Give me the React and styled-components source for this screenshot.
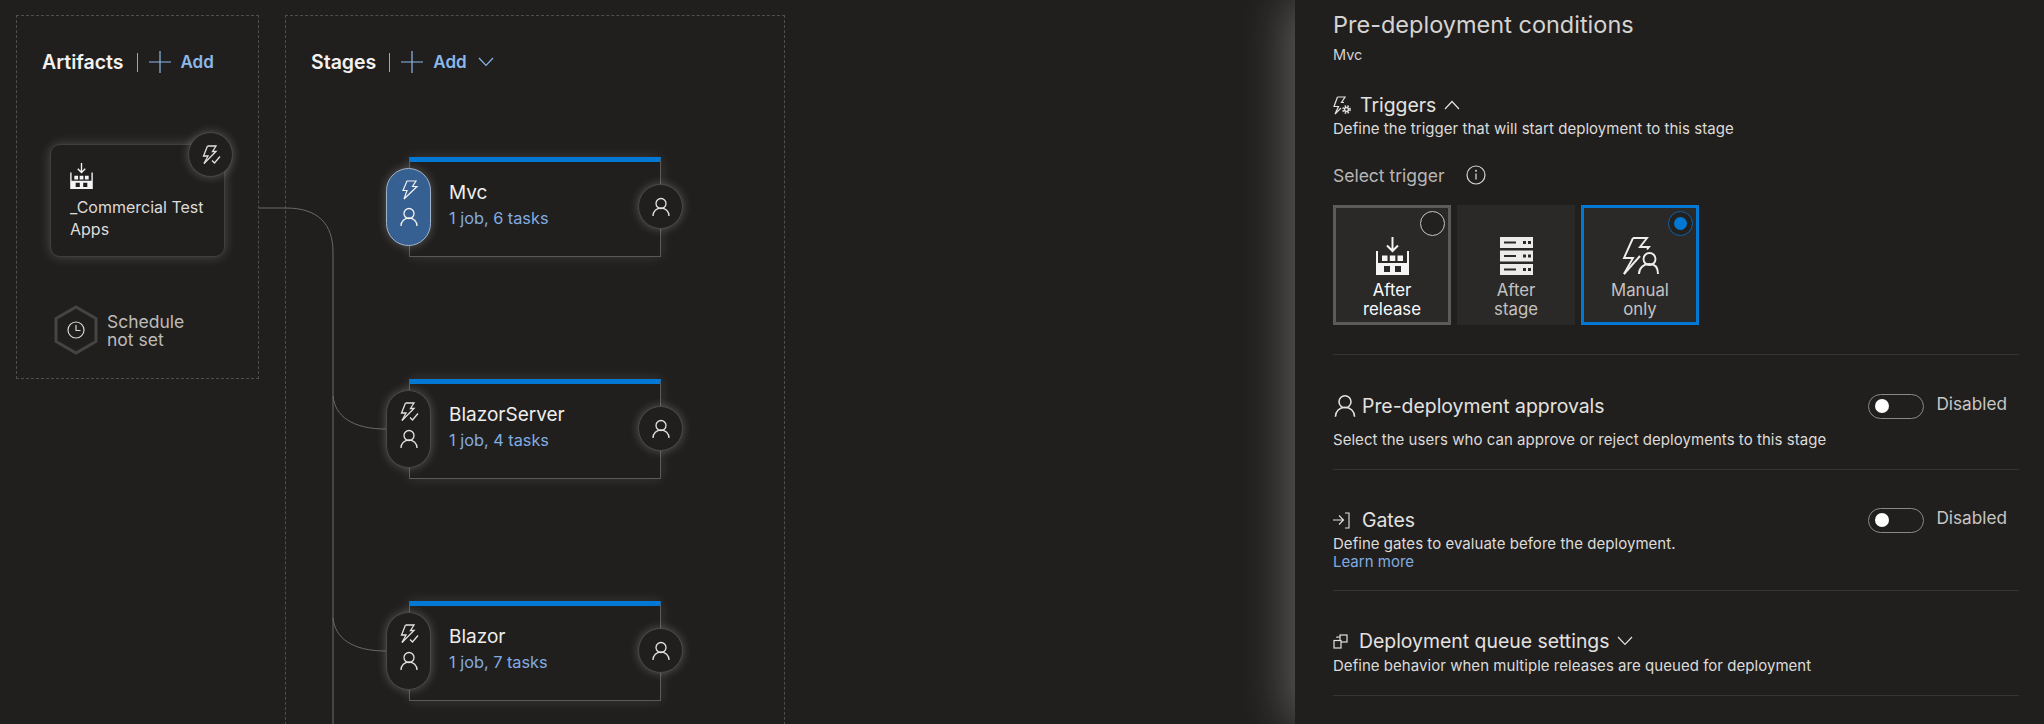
import React from "react";
import styled, { createGlobalStyle } from "styled-components";

const Global = createGlobalStyle`
  html, body { margin: 0; padding: 0; background: #201f1e; }
  body { font-family: Inter, "Noto Sans", sans-serif; color: #e8e6e4; }
  * { box-sizing: border-box; }
  svg { display: block; flex: none; }
`;

const Page = styled.div`
  width: 2044px; height: 724px; display: flex; overflow: hidden; background: #201f1e; position: relative;
`;
const Canvas = styled.main`
  flex: 1; display: flex; align-items: flex-start; gap: 26px; padding: 15px 0 0 16px; position: relative;
`;
const Wires = styled.svg`
  position: absolute; left: 0; top: 0; width: 800px; height: 724px; pointer-events: none;
`;
const Zone = styled.section`
  position: relative;
  width: ${p => p.$w}px; height: ${p => p.$h}px; flex: none;
  border: 1px dashed #4f4e4d;
  padding-left: ${p => p.$pad}px;
`;
const Header = styled.div`
  display: flex; align-items: center; height: 36px; margin-top: 28px;
`;
const HeaderTitle = styled.span`
  font-size: 19.5px; font-weight: 600; color: #f3f1ef;
`;
const HeaderSep = styled.span`
  width: 1px; height: 19px; background: #a8a6a4; margin: 0 11px 0 13px;
`;
const AddLabel = styled.span`
  font-size: 17px; font-weight: 600; color: #8cb7ea; margin-left: 10px;
`;
const ArtifactCard = styled.div`
  position: relative; width: 175px; height: 113px; margin: 64px 0 0 8px;
  background: #201f1e; border-radius: 10px; border: 1px solid #403f3e;
  box-shadow: 0 0 12px rgba(255,255,255,.2);
  padding: 18px 0 0 19px;
`;
const ArtifactName = styled.div`
  font-size: 16px; line-height: 22px; color: #dddbd9; margin-top: 7px; width: 150px;
`;
const Round = styled.div`
  position: absolute; width: 45px; height: 45px; border-radius: 50%;
  background: #201f1e; border: 1px solid #4a4948;
  box-shadow: 0 0 10px rgba(255,255,255,.25);
  display: flex; align-items: center; justify-content: center;
  left: ${p => p.$left}px; top: ${p => p.$top}px;
`;
const Schedule = styled.div`
  display: flex; align-items: center; gap: 8px; margin: 48px 0 0 11px;
`;
const ScheduleText = styled.div`
  font-size: 17.5px; line-height: 18px; color: #bdbbb9; margin-top: 2px;
`;
const StageList = styled.div`
  display: flex; flex-direction: column; gap: 122px; margin: 77px 0 0 98px;
`;
const Stage = styled.article`
  position: relative; width: 252px; height: 100px; flex: none;
  border: 1px solid #5a5958; border-top: 5px solid #0078d4;
  box-shadow: 0 0 12px rgba(255,255,255,.12);
  padding: 19px 0 0 39px;
`;
const StageName = styled.div`
  font-size: 19px; line-height: 24px; color: #f0eeec;
`;
const StageInfo = styled.div`
  font-size: 16.3px; line-height: 20px; margin-top: 3px; color: #82ace0;
`;
const Pill = styled.div`
  position: absolute; left: -24px; top: 6px; width: 45px; height: 78px; border-radius: 23px;
  background: ${p => p.$active ? "#365f92" : "#201f1e"};
  border: 1px solid ${p => p.$active ? "#9fb3cb" : "#4a4948"};
  box-shadow: 0 0 10px rgba(255,255,255,.25);
  display: flex; flex-direction: column; align-items: center; justify-content: center; gap: 7px;
  padding-bottom: 8px;
`;
const Panel = styled.aside`
  width: 749px; flex: none; height: 724px; background: #201f1e; position: relative;
  box-shadow: -6px 0 46px rgba(255,255,255,.3);
  padding: 10px 25px 0 38px;
`;
const Title = styled.h1`
  font-size: 23.5px; line-height: 30px; font-weight: 400; margin: 0; color: #d6d4d2;
`;
const Sub = styled.div`
  font-size: 14.5px; line-height: 20px; margin-top: 5px; color: #d4d2d0;
`;
const SectionHead = styled.div`
  display: flex; align-items: center; height: ${p => p.$h || 24}px; margin-top: ${p => p.$mt}px;
`;
const SectionName = styled.span`
  font-size: 19.4px; color: #e4e2e0; margin-left: ${p => p.$ml}px; margin-right: ${p => p.$mr || 0}px;
`;
const Desc = styled.div`
  font-size: 15px; line-height: 18px; margin-top: ${p => p.$mt}px; color: #dddbd9; letter-spacing: .04px;
`;
const LearnLink = styled.a`
  display: block; font-size: 15px; line-height: 18px; color: #82ace0;
`;
const SelectRow = styled.div`
  display: flex; align-items: center; height: 20px; margin-top: 27px; gap: 21px;
`;
const SelectLabel = styled.span`
  font-size: 17.5px; color: #b8b6b4;
`;
const TriggerRow = styled.div`
  display: flex; gap: 6px; margin-top: 20px;
`;
const TriggerCard = styled.div`
  position: relative; width: 118px; height: 120px; background: #2a2928;
  border: ${p => p.$border ? `3px solid ${p.$border}` : "3px solid transparent"};
  display: flex; flex-direction: column; align-items: center; padding-top: 29px;
  color: ${p => p.$bright ? "#fafafa" : "#c4c2c0"};
`;
const TriggerLabel = styled.div`
  font-size: 16.8px; line-height: 19px; text-align: center; margin-top: 6px;
`;
const Radio = styled.span`
  position: absolute; right: 3px; top: 3px; width: 25px; height: 25px; border-radius: 50%;
  border: 1px solid ${p => p.$on ? "#0f5fa8" : "#c8c6c4"};
  background: #222120;
  display: flex; align-items: center; justify-content: center;
`;
const RadioDot = styled.span`
  width: 13px; height: 13px; border-radius: 50%; background: #0078d4;
`;
const Rule = styled.hr`
  border: 0; height: 1px; background: #353433; margin: ${p => p.$mt}px 0 0 0;
`;
const Spacer = styled.div`flex: 1;`;
const Toggle = styled.span`
  width: 56px; height: 25px; border: 1px solid #8a8886; border-radius: 13px;
  display: flex; align-items: center; padding-left: 6px;
`;
const Knob = styled.span`
  width: 14px; height: 14px; border-radius: 50%; background: #fff;
`;
const ToggleLabel = styled.span`
  font-size: 17.2px; color: #c8c6c4; margin: -5px 12px 0 12px;
`;

const Plus = () => (
  <svg width="22" height="22" viewBox="0 0 22 22"><path d="M11 0v22M0 11h22" stroke="#8cb7ea" strokeWidth="1.2" fill="none" /></svg>
);
const Chevron = ({ up, size = 16, color = "#8cb7ea", ml = 0 }) => (
  <svg width={size} height={size * 0.6} viewBox="0 0 16 9.6" style={{ marginLeft: ml }}>
    <path d={up ? "M1 9L8 1.5 15 9" : "M1 1l7 7.5L15 1"} stroke={color} strokeWidth="1.2" fill="none" />
  </svg>
);
const Bolt = ({ color = "#f2f2f2", size = 20 }) => (
  <svg width={size} height={size} viewBox="0 0 20 20">
    <path d="M8 1h9l-3.5 5.5H18L5 19l3-8.5H4z" stroke={color} strokeWidth="1.2" fill="none" />
  </svg>
);
const BoltCheck = ({ color = "#e4e2e0", size = 20 }) => (
  <svg width={size} height={size} viewBox="0 0 20 20">
    <g stroke={color} strokeWidth="1.3" fill="none">
      <path d="M6.5 1H15l-3.5 5.5H15L3 18.5" />
      <path d="M6.5 1L2.5 11H7L3 18.5" />
      <path d="M11 15.5l2.5 2.5 5.5-6.5" />
    </g>
  </svg>
);
const User = ({ color = "#e4e2e0", size = 20 }) => (
  <svg width={size} height={size} viewBox="0 0 20 20">
    <circle cx="10" cy="6.5" r="5" stroke={color} strokeWidth="1.3" fill="none" />
    <path d="M2 19c0-4.5 3.5-8 8-8s8 3.5 8 8" stroke={color} strokeWidth="1.3" fill="none" />
  </svg>
);
const Factory = ({ w = 33, h = 38, color = "#f4f4f4" }) => (
  <svg width={w} height={h} viewBox="0 0 33 38">
    <path d="M16.5 0v13M11 8.5l5.5 5.500 5.500-5.500" stroke={color} strokeWidth="2" fill="none" />
    <path fillRule="evenodd" fill={color} d="M0 14h2v12h29V14h2v24H0zM8 29v6h6v-6zM19 29v6h6v-6z" />
    <path fill={color} d="M6 18.5h5.5V24H6zM13.8 18.5h5.5V24h-5.500zM21.5 18.5H27V24h-5.500z" />
  </svg>
);
const Server = () => (
  <svg width="33" height="38" viewBox="0 0 33 38">
    {[0, 13.5, 27].map(y => (
      <g key={y}>
        <rect x="0" y={y} width="33" height="11" fill="#ecebea" />
        <rect x="4" y={y + 4.5} width="12" height="2" fill="#2a2928" />
        <rect x="23" y={y + 4} width="3" height="3" fill="#2a2928" />
        <rect x="28" y={y + 4} width="3" height="3" fill="#2a2928" />
      </g>
    ))}
  </svg>
);
const BoltUser = () => (
  <svg width="38" height="38" viewBox="0 0 38 38">
    <g stroke="#eeeeec" strokeWidth="1.9" fill="none">
      <path d="M12 1h14l-7 9h9l-2 2.5" />
      <path d="M12 1L3 21h9L3 37" />
      <path d="M3 37L19 19" />
      <circle cx="28.5" cy="22" r="6" />
      <path d="M18 37c0-6 4.5-10 10.5-10S37 31 37 37" />
    </g>
  </svg>
);
const BoltGear = () => (
  <svg width="18" height="19" viewBox="0 0 18 19">
    <g stroke="#e4e2e0" strokeWidth="1.2" fill="none">
      <path d="M4.5 1H12L8.5 6.5H11" />
      <path d="M4.5 1L1 10.5h4.5L2 18l6-6" />
      <circle cx="13.5" cy="13.5" r="2" strokeWidth="1.5" />
      <circle cx="13.5" cy="13.5" r="3.6" strokeWidth="1.5" strokeDasharray="1.6 1.3" />
    </g>
  </svg>
);
const Info = () => (
  <svg width="20" height="20" viewBox="0 0 20 20">
    <circle cx="10" cy="10" r="9" stroke="#d4d2d0" strokeWidth="1.2" fill="none" />
    <path d="M10 8.5v6" stroke="#d4d2d0" strokeWidth="1.3" />
    <circle cx="10" cy="5.8" r="1" fill="#d4d2d0" />
  </svg>
);
const GateIcon = () => (
  <svg width="17" height="17" viewBox="0 0 17 17">
    <path d="M0 8h10M6 3.5L10.5 8 6 12.5M12 1h4v15h-4" stroke="#e4e2e0" strokeWidth="1.1" fill="none" />
  </svg>
);
const QueueIcon = () => (
  <svg width="15" height="15" viewBox="0 0 15 15">
    <g stroke="#e4e2e0" strokeWidth="1.2" fill="none">
      <rect x="7" y="1" width="7" height="7" />
      <rect x="1" y="6.5" width="7" height="7.5" fill="#201f1e" />
      <path d="M4 4V3h3" />
    </g>
  </svg>
);
const Hexagon = () => (
  <svg width="46" height="50" viewBox="0 0 46 50">
    <path d="M23 2l20 11.5v23L23 48 3 36.5v-23z" fill="#201f1e" stroke="#454443" strokeWidth="3" />
    <circle cx="23" cy="25" r="8" stroke="#d8d6d4" strokeWidth="1.2" fill="none" />
    <path d="M23 20v5.5h4.5" stroke="#d8d6d4" strokeWidth="1.2" fill="none" />
  </svg>
);

const stages = [
  { name: "Mvc", info: "1 job, 6 tasks", active: true },
  { name: "BlazorServer", info: "1 job, 4 tasks" },
  { name: "Blazor", info: "1 job, 7 tasks" },
];

export default function App() {
  return (
    <Page>
      <Global />
      <Canvas>
        <Zone $w={243} $h={364} $pad={25}>
          <Header>
            <HeaderTitle>Artifacts</HeaderTitle>
            <HeaderSep />
            <Plus />
            <AddLabel>Add</AddLabel>
          </Header>
          <ArtifactCard>
            <Factory w={23} h={26} />
            <ArtifactName>_Commercial Test Apps</ArtifactName>
            <Round $left={137} $top={-13}><BoltCheck size={20} /></Round>
          </ArtifactCard>
          <Schedule>
            <Hexagon />
            <ScheduleText>Schedule<br />not set</ScheduleText>
          </Schedule>
        </Zone>
        <Zone $w={500} $h={760} $pad={25}>
          <Header>
            <HeaderTitle>Stages</HeaderTitle>
            <HeaderSep />
            <Plus />
            <AddLabel>Add</AddLabel>
            <Chevron ml={11} />
          </Header>
          <StageList>
            {stages.map(s => (
              <Stage key={s.name}>
                <Pill $active={s.active}>
                  {s.active ? <Bolt /> : <BoltCheck />}
                  <User color={s.active ? "#f2f2f2" : "#e4e2e0"} size={20} />
                </Pill>
                <StageName>{s.name}</StageName>
                <StageInfo>{s.info}</StageInfo>
                <Round $left={228} $top={22}><User size={20} /></Round>
              </Stage>
            ))}
          </StageList>
        </Zone>
        <Wires viewBox="0 0 800 724">
          <g stroke="#6a6968" fill="none">
            <path d="M259 208H286C318 208 333 224 333 252V724" />
            <path d="M333 396C335 416 352 429 386 429" />
            <path d="M333 618C335 638 352 651 386 651" />
          </g>
        </Wires>
      </Canvas>
      <Panel>
        <Title>Pre-deployment conditions</Title>
        <Sub>Mvc</Sub>
        <SectionHead $mt={28}>
          <BoltGear />
          <SectionName $ml={9} $mr={8}>Triggers</SectionName>
          <Chevron up color="#e4e2e0" />
        </SectionHead>
        <Desc $mt={3}>Define the trigger that will start deployment to this stage</Desc>
        <SelectRow>
          <SelectLabel>Select trigger</SelectLabel>
          <Info />
        </SelectRow>
        <TriggerRow>
          <TriggerCard $border="#5c5b5a" $bright>
            <Radio />
            <Factory />
            <TriggerLabel>After<br />release</TriggerLabel>
          </TriggerCard>
          <TriggerCard>
            <Server />
            <TriggerLabel>After<br />stage</TriggerLabel>
          </TriggerCard>
          <TriggerCard $border="#0078d4">
            <Radio $on><RadioDot /></Radio>
            <BoltUser />
            <TriggerLabel>Manual<br />only</TriggerLabel>
          </TriggerCard>
        </TriggerRow>
        <Rule $mt={29} />
        <SectionHead $mt={38} $h={26}>
          <User size={24} />
          <SectionName $ml={5}>Pre-deployment approvals</SectionName>
          <Spacer />
          <Toggle><Knob /></Toggle>
          <ToggleLabel>Disabled</ToggleLabel>
        </SectionHead>
        <Desc $mt={12}>Select the users who can approve or reject deployments to this stage</Desc>
        <Rule $mt={20} />
        <SectionHead $mt={37} $h={26}>
          <GateIcon />
          <SectionName $ml={12}>Gates</SectionName>
          <Spacer />
          <Toggle><Knob /></Toggle>
          <ToggleLabel>Disabled</ToggleLabel>
        </SectionHead>
        <Desc $mt={2}>Define gates to evaluate before the deployment.</Desc>
        <LearnLink>Learn more</LearnLink>
        <Rule $mt={19} />
        <SectionHead $mt={38}>
          <QueueIcon />
          <SectionName $ml={11} $mr={8}>Deployment queue settings</SectionName>
          <Chevron color="#e4e2e0" />
        </SectionHead>
        <Desc $mt={4}>Define behavior when multiple releases are queued for deployment</Desc>
        <Rule $mt={20} />
      </Panel>
    </Page>
  );
}
